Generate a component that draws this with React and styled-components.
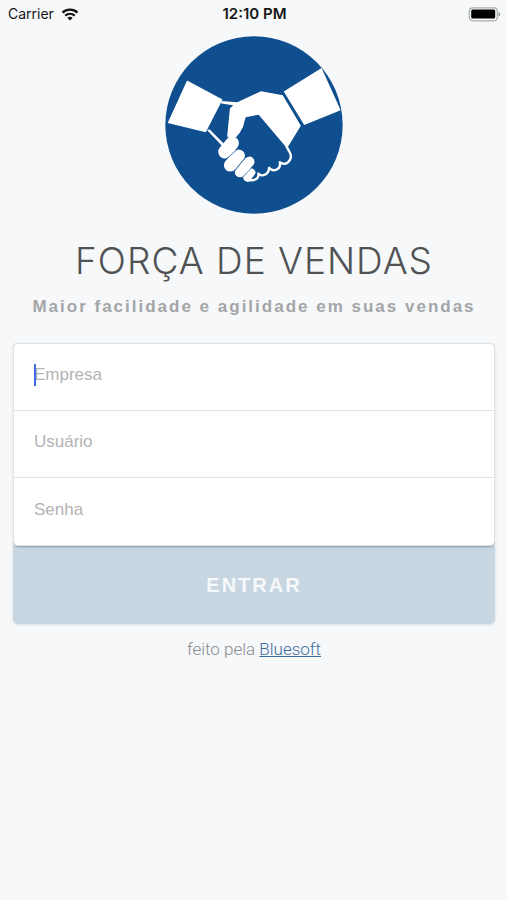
import React from "react";
import styled, { createGlobalStyle } from "styled-components";

const GlobalStyle = createGlobalStyle`
  *, *::before, *::after { box-sizing: border-box; }
  body {
    margin: 0;
    background: #f6f8fa;
    font-family: "Liberation Sans", Arial, sans-serif;
  }
`;

const Page = styled.div`
  min-height: 100vh;
  background: #f6f8fa;
`;

const StatusBar = styled.header`
  display: grid;
  grid-template-columns: 1fr auto 1fr;
  align-items: center;
  height: 28px;
  padding: 0 6px 0 8px;
  color: #151515;
  font: 400 14px/28px Inter, sans-serif;
`;

const Carrier = styled.div`
  display: flex;
  align-items: center;
  gap: 7px;
`;

const Clock = styled.time`
  font-size: 15px;
  font-weight: 600;
`;

const Battery = styled.div`
  display: flex;
  justify-content: flex-end;
`;

const Main = styled.main`
  display: flex;
  flex-direction: column;
  align-items: center;
  padding: 8px 12px 24px 13px;
`;

const Logo = styled.svg`
  display: block;
  width: 178px;
  height: 178px;
`;

const Title = styled.h1`
  margin: 23px 0 0;
  color: #505254;
  font: 300 37px/48px Inter, sans-serif;
  letter-spacing: 1px;
  text-align: center;
`;

const Tagline = styled.p`
  margin: 12px 0 0;
  color: #a3a5a7;
  font-size: 17px;
  font-weight: 700;
  line-height: 20px;
  letter-spacing: 2px;
  text-align: center;
`;

const LoginForm = styled.form`
  width: 100%;
  margin-top: 26px;
  border-radius: 5px;
  box-shadow: 0 1px 3px rgba(60, 80, 100, 0.14);
`;

const Fields = styled.div`
  position: relative;
  border: 1px solid #e0e3e5;
  border-radius: 5px;
  background: #fff;
  box-shadow: 0 1px 2px rgba(70, 90, 100, 0.5);
  clip-path: inset(0 0 -4px 0);
`;

const Field = styled.label`
  position: relative;
  display: block;
  height: 67px;
  border-bottom: 1px solid #e1e3e5;

  &:last-child { border-bottom: 0; }
`;

const Caret = styled.span`
  position: absolute;
  top: 20px;
  left: 20px;
  width: 2px;
  height: 22px;
  background: #4169e8;
`;

const Input = styled.input`
  display: block;
  width: 100%;
  height: 100%;
  padding: 0 20px 4px;
  border: 0;
  border-radius: 5px;
  outline: 0;
  background: transparent;
  color: #505254;
  caret-color: transparent;
  font: 400 17px/24px "Liberation Sans", Arial, sans-serif;

  &::placeholder { color: #b3b3b3; opacity: 1; }
`;

const SubmitButton = styled.button`
  display: block;
  width: 100%;
  height: 78px;
  padding: 0;
  border: 0;
  border-radius: 0 0 5px 5px;
  background: #c8d6e2;
  color: #f6f9fb;
  font: 700 20px/24px "Liberation Sans", Arial, sans-serif;
  letter-spacing: 2px;
`;

const Credit = styled.p`
  margin: 13px 0 0;
  color: #8a8c8f;
  font: 300 17px/24px Roboto, sans-serif;
`;

const CreditLink = styled.a`
  color: #3d6c9f;
  text-decoration: underline;
`;

const fields = [
  { name: "empresa", label: "Empresa", type: "text", active: true },
  { name: "usuario", label: "Usuário", type: "text" },
  { name: "senha", label: "Senha", type: "password" },
];

function WifiIcon() {
  return (
    <svg width="18" height="13" viewBox="0 0 18 13" fill="none" aria-hidden="true">
      <path d="M1.5 4.6C5.8.6 12.2.6 16.5 4.6" stroke="#111" strokeWidth="2.3" />
      <path d="M4.2 7.6C7 5.2 11 5.2 13.8 7.6" stroke="#111" strokeWidth="2.2" />
      <path d="M6.3 9.7C7.9 8.4 10.1 8.4 11.7 9.7L9 12.5Z" fill="#111" />
    </svg>
  );
}

function BatteryIcon() {
  return (
    <svg width="33" height="15" viewBox="0 0 33 15" aria-hidden="true">
      <rect x="1.3" y=".8" width="28" height="13" rx="3.5" fill="#f6f8fa" stroke="#aaadab" strokeWidth="1.2" />
      <rect x="3.2" y="2.6" width="24" height="9" rx="1.5" fill="#000" />
      <path d="M30.5 5Q32.2 5.6 32.2 7.3T30.5 9.6Z" fill="#999b9a" />
    </svg>
  );
}

function HandshakeLogo() {
  return (
    <Logo viewBox="16 18 532 532" role="img" aria-label="Força de Vendas">
      <circle cx="282" cy="284" r="265" fill="#0f4f8f" />
      <g fill="#fff">
        <path d="M82 151 188 208 138 306 24 278Z" />
        <path d="M371 184 484 114 541 240 432 284Z" />
        <path d="M184 212 232 216 303 183 368 195 422 286 384 348 375 347 296 253 257 261 249 290Q240 309 229 320L204 321 202 316 210 235 220 225 184 220Z" />
        <path d="M142 300 149 297 192 340 187 347Z" />
      </g>
      <g fill="none" stroke="#fff" strokeLinecap="round">
        <path strokeWidth="40" d="M195 364 217 338" />
        <path strokeWidth="38" d="M211 404 236 376" />
        <path strokeWidth="31" d="M240 425 268 394" />
        <path strokeWidth="24" d="M262 441 274 426" />
      </g>
      <g fill="none" stroke="#0f4f8f" strokeWidth="2" strokeLinecap="round">
        <path d="M199 386 232 357" />
        <path d="M225 421 254 383" />
        <path d="M250 438 280 407" />
      </g>
      <path
        d="M379 348 390 368Q397 385 382 397 371 404 359 395 363 413 347 418 336 422 327 412 327 430 310 434 301 436 295 429 297 446 279 449L264 449"
        fill="none"
        stroke="#fff"
        strokeWidth="7"
        strokeLinecap="round"
        strokeLinejoin="round"
      />
    </Logo>
  );
}

export default function App() {
  return (
    <>
      <GlobalStyle />
      <Page>
        <StatusBar>
          <Carrier>
            Carrier
            <WifiIcon />
          </Carrier>
          <Clock>12:10 PM</Clock>
          <Battery>
            <BatteryIcon />
          </Battery>
        </StatusBar>
        <Main>
          <HandshakeLogo />
          <Title>FORÇA DE VENDAS</Title>
          <Tagline>Maior facilidade e agilidade em suas vendas</Tagline>
          <LoginForm onSubmit={(event) => event.preventDefault()}>
            <Fields>
              {fields.map((field) => (
                <Field key={field.name}>
                  {field.active && <Caret />}
                  <Input
                    name={field.name}
                    type={field.type}
                    placeholder={field.label}
                    aria-label={field.label}
                  />
                </Field>
              ))}
            </Fields>
            <SubmitButton type="submit">ENTRAR</SubmitButton>
          </LoginForm>
          <Credit>
            feito pela <CreditLink href="#bluesoft">Bluesoft</CreditLink>
          </Credit>
        </Main>
      </Page>
    </>
  );
}
